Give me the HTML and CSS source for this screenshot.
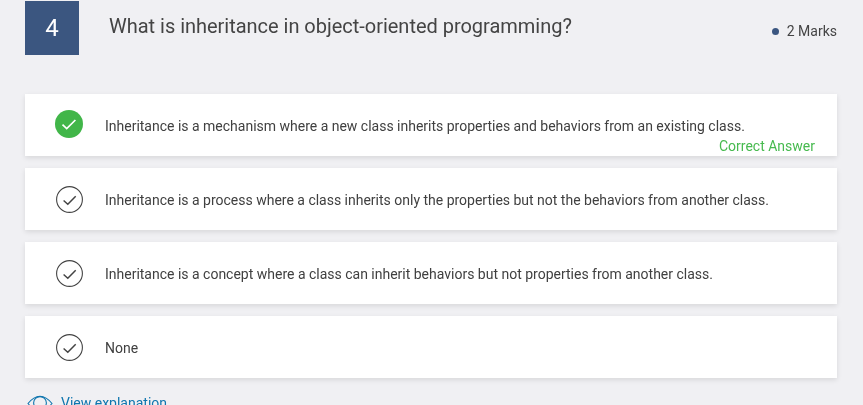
FILE: index.html
```
<!DOCTYPE html>
<html lang="en">
<head>
<meta charset="utf-8">
<title>Question 4</title>
<link rel="stylesheet" href="styles.css">
</head>
<body>
<main class="question">
  <header class="question-head">
    <div class="number">4</div>
    <h2 class="title">What is inheritance in object-oriented programming?</h2>
    <div class="marks"><span class="dot"></span>2 Marks</div>
  </header>
  <ul class="options">
    <li class="option">
      <svg class="icon icon-correct" viewBox="0 0 28 28"><circle cx="14" cy="14" r="14" fill="#41b649"/><path d="M7.500 14.600l4.200 3.900 8.700-8.500" fill="none" stroke="#fff" stroke-width="1.700"/></svg>
      <span class="text">Inheritance is a mechanism where a new class inherits properties and behaviors from an existing class.</span>
      <span class="correct">Correct Answer</span>
    </li>
    <li class="option">
      <svg class="icon" viewBox="0 0 27 27"><circle cx="13.500" cy="13.500" r="12.900" fill="none" stroke="#444" stroke-width="1.100"/><path d="M7.600 14.500l4.200 3.700 7.900-8" fill="none" stroke="#444" stroke-width="1.500"/></svg>
      <span class="text">Inheritance is a process where a class inherits only the properties but not the behaviors from another class.</span>
    </li>
    <li class="option">
      <svg class="icon" viewBox="0 0 27 27"><circle cx="13.500" cy="13.500" r="12.900" fill="none" stroke="#444" stroke-width="1.100"/><path d="M7.600 14.500l4.200 3.700 7.900-8" fill="none" stroke="#444" stroke-width="1.500"/></svg>
      <span class="text">Inheritance is a concept where a class can inherit behaviors but not properties from another class.</span>
    </li>
    <li class="option">
      <svg class="icon" viewBox="0 0 27 27"><circle cx="13.500" cy="13.500" r="12.900" fill="none" stroke="#444" stroke-width="1.100"/><path d="M7.600 14.500l4.200 3.700 7.900-8" fill="none" stroke="#444" stroke-width="1.500"/></svg>
      <span class="text">None</span>
    </li>
  </ul>
  <a class="explain" href="#">
    <svg class="eye" viewBox="0 0 26 16"><path d="M1 8.500C5 3.500 9 1.200 13 1.200s8 2.300 12 7.300c-4 5-8 7.300-12 7.300S5 13.500 1 8.500z" fill="none" stroke="#0f75ae" stroke-width="1.100"/><circle cx="13" cy="8" r="6.400" fill="none" stroke="#0f75ae" stroke-width="1.100"/></svg>
    View explanation
  </a>
</main>
</body>
</html>
```

FILE: styles.css
```
html, body {
  margin: 0;
  height: 405px;
  overflow: hidden;
  background: #f0f0f3;
  font-family: Roboto, "Liberation Sans", sans-serif;
  color: #404040;
}
.question {
  padding: 1px 26px 0 25px;
  will-change: transform;
}
.question-head {
  display: flex;
  align-items: flex-start;
  height: 93px;
}
.number {
  width: 54px;
  height: 54px;
  display: flex;
  align-items: center;
  justify-content: center;
  background: #3b5680;
  color: #fff;
  font-size: 24px;
  flex: none;
}
.title {
  margin: 12px 0 0 30px;
  flex: 1;
  font-size: 20px;
  line-height: 26px;
  font-weight: 400;
  color: #444;
  letter-spacing: -0.02px;
}
.marks {
  display: flex;
  align-items: center;
  margin-top: 21px;
  font-size: 14px;
  line-height: 18px;
  color: #444;
}
.dot {
  width: 7px;
  height: 7px;
  border-radius: 50%;
  background: #3b5680;
  margin-right: 8px;
}
.options {
  list-style: none;
  margin: 0;
  padding: 0;
  display: flex;
  flex-direction: column;
  gap: 12px;
}
.option {
  position: relative;
  height: 62px;
  display: flex;
  align-items: center;
  background: #fff;
  box-shadow: 0 2px 5px rgba(0, 0, 0, 0.1);
  padding-left: 31px;
  font-size: 14px;
  color: #404040;
}
.icon {
  width: 27px;
  height: 27px;
  flex: none;
}
.icon-correct {
  width: 28px;
  height: 28px;
  margin: -2px 0 0 -1px;
}
.text {
  margin-left: 22px;
  margin-top: 1px;
  letter-spacing: -0.005px;
}
.correct {
  position: absolute;
  right: 22px;
  bottom: 1px;
  color: #47ba4f;
  line-height: 18px;
}
.explain {
  display: flex;
  align-items: center;
  margin: 17px 0 0 2px;
  font-size: 14px;
  color: #0f75ae;
  text-decoration: none;
}
.eye {
  width: 26px;
  height: 16px;
  margin-right: 8px;
}
```
